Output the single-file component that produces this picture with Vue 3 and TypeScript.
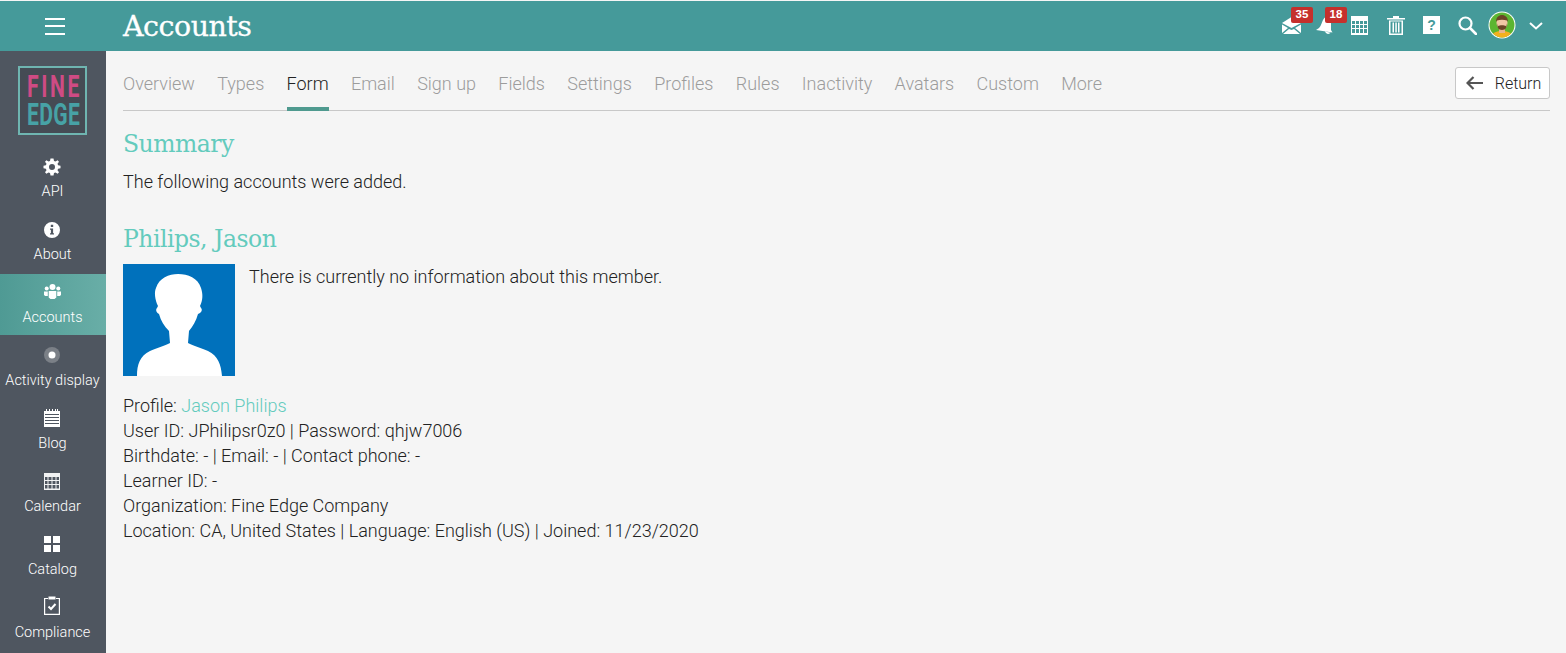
<script setup lang="ts">
const tabs: string[] = ['Overview','Types','Form','Email','Sign up','Fields','Settings','Profiles','Rules','Inactivity','Avatars','Custom','More']
const nav: { label: string; icon: string }[] = [
  { label: 'API', icon: 'gear' },
  { label: 'About', icon: 'info' },
  { label: 'Accounts', icon: 'people' },
  { label: 'Activity display', icon: 'dot' },
  { label: 'Blog', icon: 'blog' },
  { label: 'Calendar', icon: 'cal' },
  { label: 'Catalog', icon: 'grid' },
  { label: 'Compliance', icon: 'check' }
]
</script>

<template>
  <div class="page">
    <header class="top">
      <div class="burger"><span></span><span></span><span></span></div>
      <h1 class="title">Accounts</h1>
      <div class="tools">
        <div class="tool mail">
          <svg width="19" height="18" viewBox="0 0 19 18"><path fill="#fff" d="M0 7 L9.500 1 L19 7 L9.500 12Z"/><path fill="#fff" d="M0 8.500 L6 12 L0 17Z M19 8.500 L13 12 L19 17Z M1 18 L7 13 L9.500 14 L12 13 L18 18Z"/></svg>
          <span class="badge">35</span>
        </div>
        <div class="tool bell">
          <svg width="18" height="18" viewBox="0 0 18 18"><path fill="#fff" d="M11 1 C14 1 15 4 15 8 L15 14 L16.500 16.500 L0 14 L3 12 C5 10 6 6 7 4 C8 2 9 1 11 1Z M9 15.500 L14.500 16.800 C13.500 18.500 10 18.500 9 15.500Z"/></svg>
          <span class="badge">18</span>
        </div>
        <svg class="ic" width="17" height="19" viewBox="0 0 17 19"><path fill="#fff" fill-rule="evenodd" d="M0 0H17V19H0Z M1 5V8H4V5Z M5 5V8H8V5Z M9 5V8H12V5Z M13 5V8H16V5Z M1 9V12H4V9Z M5 9V12H8V9Z M9 9V12H12V9Z M13 9V12H16V9Z M1 13V17H4V13Z M5 13V17H8V13Z M9 13V17H12V13Z M13 13V17H16V13Z"/></svg>
        <svg class="ic trash" width="18" height="19" viewBox="0 0 18 19"><path fill="#fff" fill-rule="evenodd" d="M6 0H12V2H18V3.500H0V2H6Z M2 4.500H16V19H2Z M3.500 5.500V17.500H14.500V5.500Z"/><path fill="#fff" d="M5.500 6.500H7V16.500H5.500Z M8.300 6.500H9.800V16.500H8.300Z M11 6.500H12.500V16.500H11Z"/></svg>
        <div class="help">?</div>
        <svg class="ic search" width="19" height="19" viewBox="0 0 19 19"><circle cx="7.500" cy="7.500" r="6" fill="none" stroke="#fff" stroke-width="2.200"/><path d="M12 12 L18 18" stroke="#fff" stroke-width="2.600" stroke-linecap="round"/></svg>
        <svg class="avatar" width="28" height="28" viewBox="0 0 28 28">
          <circle cx="14" cy="14" r="13.500" fill="#fff"/>
          <circle cx="14" cy="14" r="12.500" fill="#5cb531"/>
          <clipPath id="av"><circle cx="14" cy="14" r="12.500"/></clipPath>
          <g clip-path="url(#av)">
            <path fill="#f2b01e" d="M3 27 C4 21 9 20 14 20 C19 20 24 21 25 27Z"/>
            <rect x="11" y="16" width="6" height="6" fill="#e8b48c"/>
            <ellipse cx="14" cy="12" rx="5.500" ry="6.500" fill="#f0c6a4"/>
            <path fill="#6b4526" d="M8 11 C8 6 11 4 14 4 C17 4 20 6 20 11 L19 9.500 C16 8.500 12 8.500 9 9.500Z M8.800 12 L10 17 C11 19.500 17 19.500 18 17 L19.200 12 L18 15 C16 14 12 14 10 15Z"/>
          </g>
        </svg>
        <svg class="chev" width="14" height="8" viewBox="0 0 14 8"><path d="M1 1 L7 6.500 L13 1" fill="none" stroke="#fff" stroke-width="2"/></svg>
      </div>
    </header>
    <div class="body">
      <aside class="side">
        <div class="logo">
          <svg width="69" height="69" viewBox="0 0 69 69">
            <rect x="1" y="1" width="67" height="67" fill="#454b54" stroke="#6fb5b1" stroke-width="2"/>
            <text transform="translate(9 31) scale(0.66 1)" class="lt fine" fill="#cf4b84">FINE</text>
            <text transform="translate(9 59) scale(0.66 1)" class="lt edge" fill="#47a2a6">EDGE</text>
          </svg>
        </div>
        <div v-for="n in nav" :key="n.label" class="item" :class="{ active: n.label === 'Accounts' }">
          <span class="ni">
            <svg v-if="n.icon === 'gear'" class="down" width="18" height="18" viewBox="0 0 18 18"><path fill="#fff" fill-rule="evenodd" d="M7.500 0.500H10.500L11 3 L12.500 3.600 L14.600 2.200 L16 3.800 L14.500 5.800 L15.100 7.300 L17.500 7.700V10.300L15.100 10.700 L14.500 12.200 L16 14.200 L14.600 15.800 L12.500 14.400 L11 15 L10.500 17.500H7.500L7 15 L5.500 14.400 L3.400 15.800 L2 14.200 L3.500 12.200 L2.900 10.700 L0.500 10.300V7.700L2.900 7.300 L3.500 5.800 L2 3.800 L3.400 2.200 L5.500 3.600 L7 3Z M9 6A3 3 0 1 0 9 12A3 3 0 1 0 9 6Z"/></svg>
            <svg v-else-if="n.icon === 'info'" class="down" width="16" height="16" viewBox="0 0 16 16"><path fill="#fff" fill-rule="evenodd" d="M8 0A8 8 0 1 1 8 16A8 8 0 1 1 8 0Z M6.800 2.800V5H9.200V2.800Z M6 6.500V7.800H6.900V11.300H6V12.500H10V11.300H9.100V6.500Z"/></svg>
            <svg v-else-if="n.icon === 'people'" class="up" width="17" height="15" viewBox="0 0 17 15"><g fill="#fff"><circle cx="8.500" cy="3" r="3"/><circle cx="2.700" cy="4.500" r="2"/><circle cx="14.300" cy="4.500" r="2"/><path d="M0 7.500H3.800V12H1.200L0 11Z M17 7.500H13.200V12H15.800L17 11Z M4.700 7H12.300V13.500L10.500 15H6.500L4.700 13.500Z"/></g></svg>
            <svg v-else-if="n.icon === 'dot'" width="16" height="16" viewBox="0 0 16 16"><circle cx="8" cy="8" r="8" fill="#7b8087"/><circle cx="8" cy="8" r="3.500" fill="#fff"/></svg>
            <svg v-else-if="n.icon === 'blog'" width="16" height="18" viewBox="0 0 16 18"><path fill="#fff" fill-rule="evenodd" d="M0 2H2V0H3V2H5V0H6V2H8V0H9V2H11V0H12V2H13V0H14V2H16V18H0Z M1 5V6H15V5Z M1 8V9H15V8Z M1 11V12H15V11Z M1 14V15H15V14Z"/></svg>
            <svg v-else-if="n.icon === 'cal'" width="16" height="17" viewBox="0 0 16 17"><path fill="#f1f2f3" fill-rule="evenodd" d="M0 0H16V17H0Z M1 4V7H3.500V4Z M4.500 4V7H7.500V4Z M8.500 4V7H11.500V4Z M12.500 4V7H15V4Z M1 8V11H3.500V8Z M4.500 8V11H7.500V8Z M8.500 8V11H11.500V8Z M12.500 8V11H15V8Z M1 12V15.500H3.500V12Z M4.500 12V15.500H7.500V12Z M8.500 12V15.500H11.500V12Z M12.500 12V15.500H15V12Z"/></svg>
            <svg v-else-if="n.icon === 'grid'" width="16" height="16" viewBox="0 0 16 16"><path fill="#fff" d="M0 0H7V7H0Z M9 0H16V7H9Z M0 9H7V16H0Z M9 9H16V16H9Z"/></svg>
            <svg v-else class="up2" width="16" height="19" viewBox="0 0 16 19"><path fill="none" stroke="#fff" stroke-width="1.200" d="M4 2.500H0.600V18.400H15.400V2.500H12"/><path fill="#fff" d="M4.500 0.500H11.500V3.500H4.500Z"/><path fill="none" stroke="#fff" stroke-width="2" d="M4.500 10.500 L7 13 L11.500 8"/></svg>
          </span>
          <span class="nl">{{ n.label }}</span>
        </div>
      </aside>
      <main class="main">
        <div class="tabbar">
          <nav class="tabs">
            <span v-for="t in tabs" :key="t" class="tab" :class="{ on: t === 'Form' }">{{ t }}</span>
          </nav>
          <button class="ret">
            <svg width="17" height="14" viewBox="0 0 17 14"><path d="M7.500 1 L1.500 7 L7.500 13 M1.500 7 H17" fill="none" stroke="#555" stroke-width="2.200"/></svg>
            <span>Return</span>
          </button>
        </div>
        <h2 class="h first">Summary</h2>
        <p class="p lead">The following accounts were added.</p>
        <h2 class="h second">Philips, Jason</h2>
        <div class="person">
          <svg class="photo" width="112" height="112" viewBox="0 0 112 112">
            <rect width="112" height="112" fill="#0071bc"/>
            <path fill="#fff" d="M14 112 C14 100 17 92 27 87 C33 84 42 82 47 79 L46 67 C41 62 38 57 36 50 C34 49 32 46 34 44 L35 42 C32 36 31 28 33 24 C36 14 46 10 55 10 C65 10 75 14 78 24 C80 30 80 36 77 42 L78 44 C80 46 78 49 75 50 C73 57 70 62 66 67 L65 79 C70 82 79 84 85 87 C95 92 98 100 99 112Z"/>
          </svg>
          <p class="p note">There is currently no information about this member.</p>
        </div>
        <div class="info">
          <div>Profile: <span class="link">Jason Philips</span></div>
          <div>User ID: JPhilipsr0z0 | Password: qhjw7006</div>
          <div>Birthdate: - | Email: - | Contact phone: -</div>
          <div>Learner ID: -</div>
          <div>Organization: Fine Edge Company</div>
          <div>Location: CA, United States | Language: English (US) | Joined: 11/23/2020</div>
        </div>
      </main>
    </div>
  </div>
</template>

<style>
html, body { margin: 0; padding: 0; background: #f5f5f5; overflow: hidden; }
</style>

<style scoped>
.page { width: 1566px; height: 653px; display: flex; flex-direction: column; overflow: hidden; font-family: Roboto, sans-serif; background: #f5f5f5; color: #333; padding-top: 1px; box-sizing: border-box; }
.top { height: 50px; flex: none; background: #459a9a; display: flex; align-items: center; color: #fff; }
.burger { width: 106px; padding-left: 4px; box-sizing: border-box; display: flex; flex-direction: column; align-items: center; gap: 5.500px; }
.burger span { width: 20px; height: 2px; background: #fff; }
.title { margin: 2px 0 0 17px; font: 400 28.500px/1 "DejaVu Serif", serif; letter-spacing: -0.500px; -webkit-text-stroke: 0.3px #fff; }
.tools { margin-left: auto; display: flex; align-items: center; padding: 0 23px 2px 0; height: 50px; box-sizing: border-box; }
.tool { position: relative; display: flex; }
.mail { margin-right: 15px; }
.bell { margin-right: 17px; }
.badge { position: absolute; top: -9px; left: 9px; width: 22px; height: 16px; border-radius: 2px; background: #c5302c; color: #fff; font: 700 11.500px/15px "Liberation Sans", sans-serif; text-align: center; }
.ic { display: block; }
.trash { margin-left: 19px; }
.help { margin-left: 18px; width: 17px; height: 18px; background: #fff; color: #459a9a; font: 700 14px/18px "Liberation Sans", sans-serif; text-align: center; }
.search { margin-left: 18px; }
.avatar { margin-left: 11px; }
.chev { margin-left: 13px; margin-top: 2px; }
.body { flex: 1; display: flex; min-height: 0; }
.side { width: 106px; flex: none; background: #4f5660; overflow: hidden; }
.logo { padding: 15px 0 0 18px; height: 82px; }
.logo svg { display: block; }
.lt { font: 700 32px Roboto, sans-serif; }
.fine { letter-spacing: 4px; }
.edge { letter-spacing: 0.500px; }
.item { height: 63px; padding-right: 1px; display: flex; flex-direction: column; align-items: center; color: #fff; box-sizing: border-box; }
.item.active { background: linear-gradient(90deg, #4f9a94, #69aea7) no-repeat; background-size: 100% 61px; }
.ni { height: 24px; margin: 6px 1px 0 0; display: flex; align-items: center; justify-content: center; }
.down { margin-top: 2px; }
.up { margin-top: -2px; }
.up2 { margin-top: -3px; }
.nl { font: 300 14.500px/20px Roboto, sans-serif; margin-top: 4px; white-space: nowrap; }
.main { flex: 1; padding: 0 16px 0 17px; min-width: 0; font-weight: 300; }
.tabbar { height: 60px; box-sizing: border-box; display: flex; align-items: stretch; justify-content: space-between; border-bottom: 1px solid #c8c8c8; }
.tabs { display: flex; gap: 22.300px; }
.tab { font: 300 18px/66px Roboto, sans-serif; color: #9c9c9c; height: 59px; position: relative; }
.tab.on { color: #222; box-sizing: border-box; height: 60px; border-bottom: 4px solid #4f9a8f; }
.ret { margin-top: 16px; margin-bottom: 10px; width: 95px; height: 32px; background: #fff; border: 1px solid #c8c8c8; border-radius: 3px; display: flex; align-items: center; justify-content: center; gap: 12px; font: 300 16px Roboto, sans-serif; color: #222; padding: 0 0 0 2px; }
.h { margin: 0; font: 400 23.500px/1 "DejaVu Serif", serif; color: #63cbbd; letter-spacing: -0.500px; }
.first { margin-top: 22px; }
.second { margin-top: 34px; }
.p { margin: 0; font: 300 18px/25px Roboto, sans-serif; color: #222; }
.lead { margin-top: 12px; }
.person { display: flex; margin-top: 13px; }
.photo { display: block; flex: none; }
.note { margin: 0 0 0 14px; }
.info { margin-top: 17px; font: 300 18px/25px Roboto, sans-serif; color: #222; }
.link { color: #63cbbd; }
</style>
